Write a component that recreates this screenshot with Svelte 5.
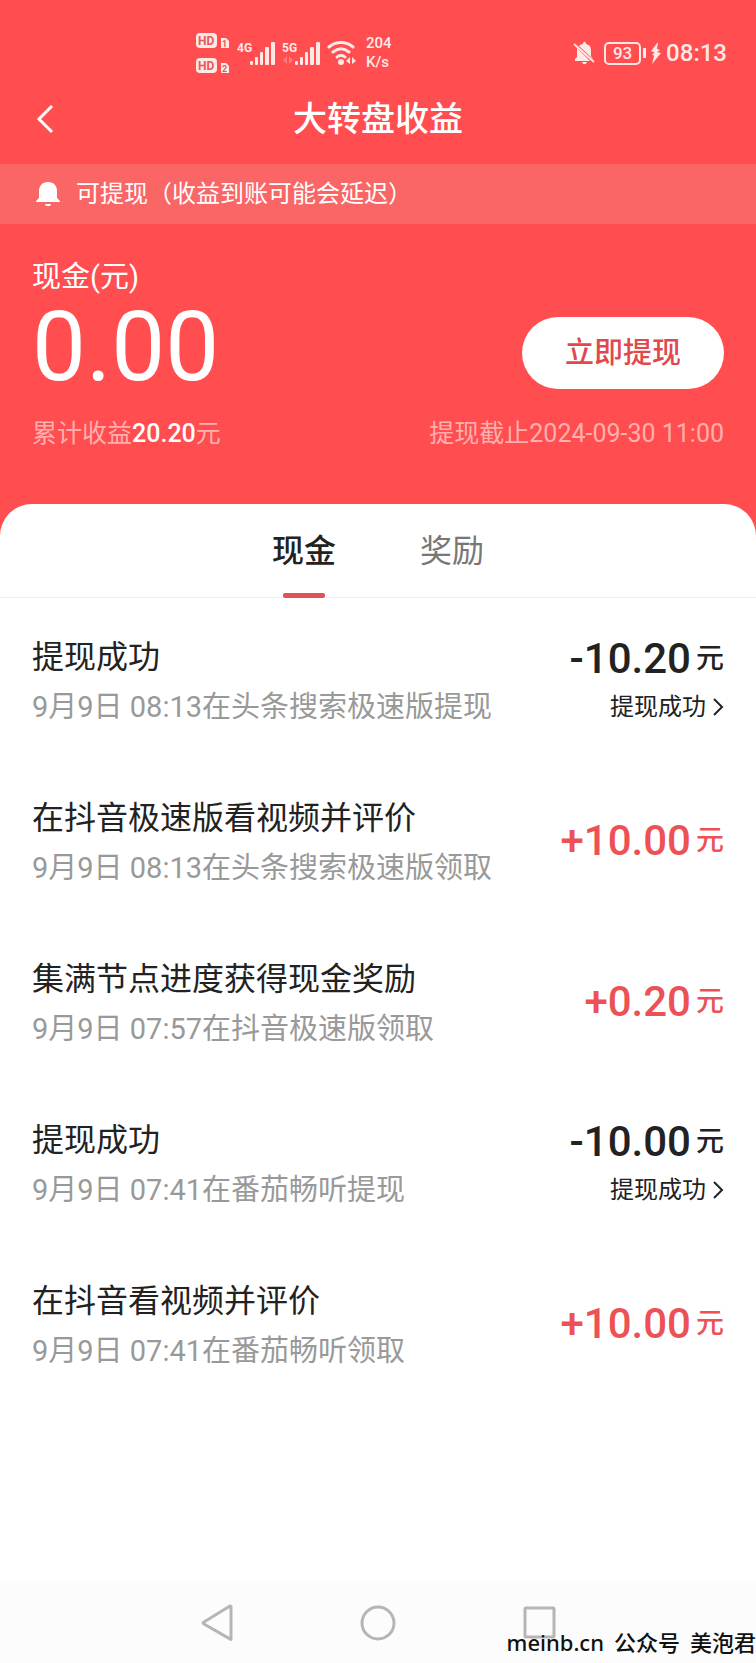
<script lang="ts">
  type Entry = {
    title: string;
    detail: string;
    amount: string;
    status?: string;
  };

  const tabs = ["现金", "奖励"];

  const entries: Entry[] = [
    { title: "提现成功", detail: "9月9日 08:13在头条搜索极速版提现", amount: "-10.20", status: "提现成功" },
    { title: "在抖音极速版看视频并评价", detail: "9月9日 08:13在头条搜索极速版领取", amount: "+10.00" },
    { title: "集满节点进度获得现金奖励", detail: "9月9日 07:57在抖音极速版领取", amount: "+0.20" },
    { title: "提现成功", detail: "9月9日 07:41在番茄畅听提现", amount: "-10.00", status: "提现成功" },
    { title: "在抖音看视频并评价", detail: "9月9日 07:41在番茄畅听领取", amount: "+10.00" },
  ];

  let activeTab = $state(0);
</script>

{#snippet signal(label: string, idle: boolean)}
  <svg width="40" height="26" viewBox="0 0 40 26" fill="currentColor">
    <text x="0" y="12" font-size="12" font-weight="700">{label}</text>
    {#if idle}
      <path d="M5 16v8l-4-4zM7 16v8l4-4z" opacity="0.3" />
    {/if}
    <rect x="13" y="21" width="3" height="4" rx="1" />
    <rect x="18" y="17" width="3" height="8" rx="1" />
    <rect x="23" y="12" width="3" height="13" rx="1" />
    <rect x="28" y="7" width="4" height="18" rx="1" />
    <rect x="34" y="2" width="4" height="23" rx="1" />
  </svg>
{/snippet}

<div class="page">
  <header class="top">
    <div class="status-bar">
      <div class="status-left">
        <svg width="34" height="42" viewBox="0 0 34 42" fill="currentColor">
          {#each [1, 2] as sim, i}
            <g transform="translate(0 {i * 25})">
              <rect x="0" y="1" width="21" height="15" rx="4" />
              <text class="knockout" x="2" y="13" font-size="12" font-weight="700">HD</text>
              <path d="M25 6h5l3 3v7h-8z" />
              <text class="knockout" x="26" y="15" font-size="9" font-weight="700">{sim}</text>
            </g>
          {/each}
        </svg>
        <div class="signals">
          {@render signal("4G", false)}
          {@render signal("5G", true)}
          <svg width="32" height="26" viewBox="0 0 32 26" fill="none" stroke="currentColor" stroke-width="3" stroke-linecap="round">
            <path d="M2 7c7-6 17-6 24 0M6 12c5-4 11-4 16 0M10 17c2-2 6-2 8 0" />
            <circle cx="14" cy="22" r="3" fill="currentColor" stroke="none" />
            <path d="M23 17v7l-4-3zM25 17v7l4-3z" fill="currentColor" stroke="none" />
          </svg>
        </div>
        <div class="speed">204<br />K/s</div>
      </div>
      <div class="status-right">
        <svg class="muted" width="22" height="24" viewBox="0 0 22 24" fill="currentColor">
          <path d="M6 5c1-1 2-2 4-2 0-3 3-3 3 0 4 1 5 3 5 7v5l2 3zM4 7l13 13H2v-2l2-2z" />
          <path d="M9 21h5c-1 3-4 3-5 0z" />
          <path d="M1 3l20 18" stroke="currentColor" stroke-width="2" />
        </svg>
        <div class="battery">
          <span class="level">93</span>
          <span class="tip"></span>
        </div>
        <svg width="10" height="22" viewBox="0 0 10 22" fill="currentColor">
          <path d="M7 0L0 9l4 2-3 1 2 2-2 8 9-11-4-1 3-2-3-1z" />
        </svg>
        <span class="clock">08:13</span>
      </div>
    </div>

    <div class="title-bar">
      <button class="back" aria-label="返回">
        <svg width="18" height="30" viewBox="0 0 18 30" fill="none" stroke="currentColor" stroke-width="3">
          <path d="M16 2L3 15l13 13" />
        </svg>
      </button>
      <h1>大转盘收益</h1>
    </div>

    <div class="notice">
      <svg width="24" height="26" viewBox="0 0 24 26" fill="currentColor">
        <path d="M12 1c6 0 9 4 9 9v7l3 3v1H0v-1l3-3v-7c0-5 3-9 9-9zM9 23h6c0 3-6 3-6 0z" />
      </svg>
      <span>可提现（收益到账可能会延迟）</span>
    </div>

    <section class="summary">
      <div class="balance">
        <div>
          <p class="balance-label">现金(元)</p>
          <p class="balance-value">0.00</p>
        </div>
        <button class="withdraw">立即提现</button>
      </div>
      <div class="meta">
        <span>累计收益<strong>20.20</strong>元</span>
        <span>提现截止2024-09-30 11:00</span>
      </div>
    </section>
  </header>

  <main class="card">
    <div class="tabs" role="tablist">
      {#each tabs as tab, i}
        <button
          class="tab"
          class:active={activeTab === i}
          role="tab"
          aria-selected={activeTab === i}
          onclick={() => (activeTab = i)}
        >{tab}</button>
      {/each}
    </div>

    <ul class="entries">
      {#each entries as entry}
        <li class="entry">
          <div class="info">
            <p class="entry-title">{entry.title}</p>
            <p class="entry-detail">{entry.detail}</p>
          </div>
          <div class="side">
            <p class="amount" class:income={entry.amount.startsWith("+")}>
              <span class="number">{entry.amount}</span>
              <span class="unit">元</span>
            </p>
            {#if entry.status}
              <button class="entry-status">
                {entry.status}
                <svg width="12" height="18" viewBox="0 0 12 18" fill="none" stroke="currentColor" stroke-width="2">
                  <path d="M2 1l8 8-8 8" />
                </svg>
              </button>
            {/if}
          </div>
        </li>
      {/each}
    </ul>
  </main>

  <nav class="system-nav">
    <button aria-label="返回">
      <svg width="36" height="38" viewBox="0 0 36 38">
        <path d="M32 3v32q0 1-1 0L5 20q-2-1 0-2L31 2q1 0 1 1z" />
      </svg>
    </button>
    <button aria-label="主屏幕">
      <svg width="36" height="38" viewBox="0 0 36 38">
        <circle cx="18" cy="19" r="16" />
      </svg>
    </button>
    <button aria-label="最近任务">
      <svg width="36" height="38" viewBox="0 0 36 38">
        <rect x="4" y="4" width="29" height="29" rx="1" />
      </svg>
    </button>
    <p class="watermark">
      <span>meinb.cn</span>
      <span>公众号</span>
      <span>美泡君</span>
    </p>
  </nav>
</div>

<style>
  :global(body) {
    margin: 0;
    background: #fff;
  }

  .page {
    display: flex;
    flex-direction: column;
    min-height: 100vh;
    background: #ff4d50;
    color: #222;
    font-family: Roboto, "Noto Sans CJK SC", sans-serif;
  }

  h1,
  p {
    margin: 0;
    font-weight: 400;
  }

  button {
    padding: 0;
    border: none;
    background: none;
    color: inherit;
    font: inherit;
    cursor: pointer;
  }

  svg {
    display: block;
    flex: none;
  }

  .top {
    color: #fff;
  }

  /* System status bar */
  .status-bar {
    display: flex;
    align-items: center;
    justify-content: space-between;
    height: 66px;
    padding: 20px 29px 0 196px;
    color: #ffe9e6;
  }

  .status-left,
  .status-right,
  .signals {
    display: flex;
    align-items: center;
  }

  .status-left {
    gap: 7px;
  }

  .signals {
    gap: 5px;
  }

  .status-right {
    gap: 5px;
  }

  .muted {
    margin-right: 4px;
  }

  .knockout {
    fill: #e8585a;
  }

  .speed {
    font-size: 15px;
    font-weight: 500;
    line-height: 19px;
  }

  .battery {
    display: flex;
    align-items: center;
    gap: 2px;
  }

  .level {
    box-sizing: border-box;
    width: 37px;
    height: 23px;
    border: 2px solid;
    border-radius: 5px;
    font-size: 17px;
    font-weight: 500;
    line-height: 19px;
    text-align: center;
  }

  .tip {
    width: 3px;
    height: 10px;
    background: currentColor;
  }

  .clock {
    font-size: 24px;
    font-weight: 500;
    line-height: 28px;
  }

  .title-bar {
    display: grid;
    grid-template-columns: 1fr auto 1fr;
    align-items: center;
    height: 66px;
    margin-bottom: 12px;
    padding: 0 36px;
  }

  .back {
    justify-self: start;
  }

  h1 {
    font-size: 34px;
    font-weight: 500;
    line-height: 48px;
  }

  .notice {
    display: flex;
    align-items: center;
    gap: 16px;
    height: 60px;
    padding: 0 36px;
    background: #fa6666;
    font-size: 24px;
    line-height: 32px;
  }

  /* Balance */
  .summary {
    padding: 33px 32px 52px;
  }

  .balance {
    display: flex;
    align-items: flex-end;
    justify-content: space-between;
  }

  .balance-label {
    font-size: 29px;
    line-height: 40px;
  }

  .balance-value {
    font-size: 96px;
    line-height: 100px;
  }

  .withdraw {
    margin-bottom: 8px;
    padding: 0 43px;
    border-radius: 36px;
    background: #fff;
    color: #e0484d;
    font-size: 29px;
    font-weight: 500;
    line-height: 72px;
  }

  .meta {
    display: flex;
    justify-content: space-between;
    margin-top: 19px;
    color: #ffb0ae;
    font-size: 25px;
    line-height: 36px;
  }

  .meta strong {
    color: #fff;
    font-weight: 500;
  }

  /* Records */
  .card {
    flex: 1;
    border-radius: 32px 32px 0 0;
    background: #fff;
  }

  .tabs {
    display: flex;
    justify-content: center;
    gap: 84px;
    padding-top: 2px;
    border-bottom: 1px solid #eee;
  }

  .tab {
    position: relative;
    color: #777;
    font-size: 32px;
    line-height: 91px;
  }

  .tab.active {
    color: #222;
    font-weight: 500;
  }

  .tab.active::after {
    content: "";
    position: absolute;
    bottom: -1px;
    left: 50%;
    width: 42px;
    height: 5px;
    margin-left: -21px;
    border-radius: 2px;
    background: #e35155;
  }

  .entries {
    margin: 0;
    padding: 3px 32px;
    list-style: none;
  }

  .entry {
    display: flex;
    align-items: center;
    justify-content: space-between;
    height: 161px;
  }

  .entry-title {
    font-size: 32px;
    line-height: 50px;
  }

  .entry-detail {
    color: #999;
    font-size: 29px;
    line-height: 50px;
  }

  .side {
    display: flex;
    flex-direction: column;
    align-items: flex-end;
  }

  .amount {
    display: flex;
    align-items: center;
    gap: 5px;
    line-height: 50px;
  }

  .amount.income {
    padding-bottom: 4px;
    color: #ec5156;
  }

  .number {
    font-size: 42px;
    font-weight: 500;
  }

  .unit {
    font-size: 28px;
    font-weight: 500;
  }

  .entry-status {
    display: flex;
    align-items: center;
    gap: 6px;
    font-size: 24px;
    line-height: 46px;
  }

  /* System navigation */
  .system-nav {
    position: relative;
    display: flex;
    align-items: center;
    justify-content: center;
    gap: 125px;
    height: 80px;
    background: #fcfcfc;
  }

  .system-nav svg {
    fill: none;
    stroke: #b5b5b5;
    stroke-width: 3;
  }

  .watermark {
    position: absolute;
    right: 0;
    bottom: 5px;
    display: flex;
    gap: 10px;
    color: #111;
    font-family: "Noto Sans", "Noto Sans CJK SC", sans-serif;
    font-size: 22px;
    font-weight: 500;
    line-height: 32px;
    white-space: nowrap;
  }
</style>
